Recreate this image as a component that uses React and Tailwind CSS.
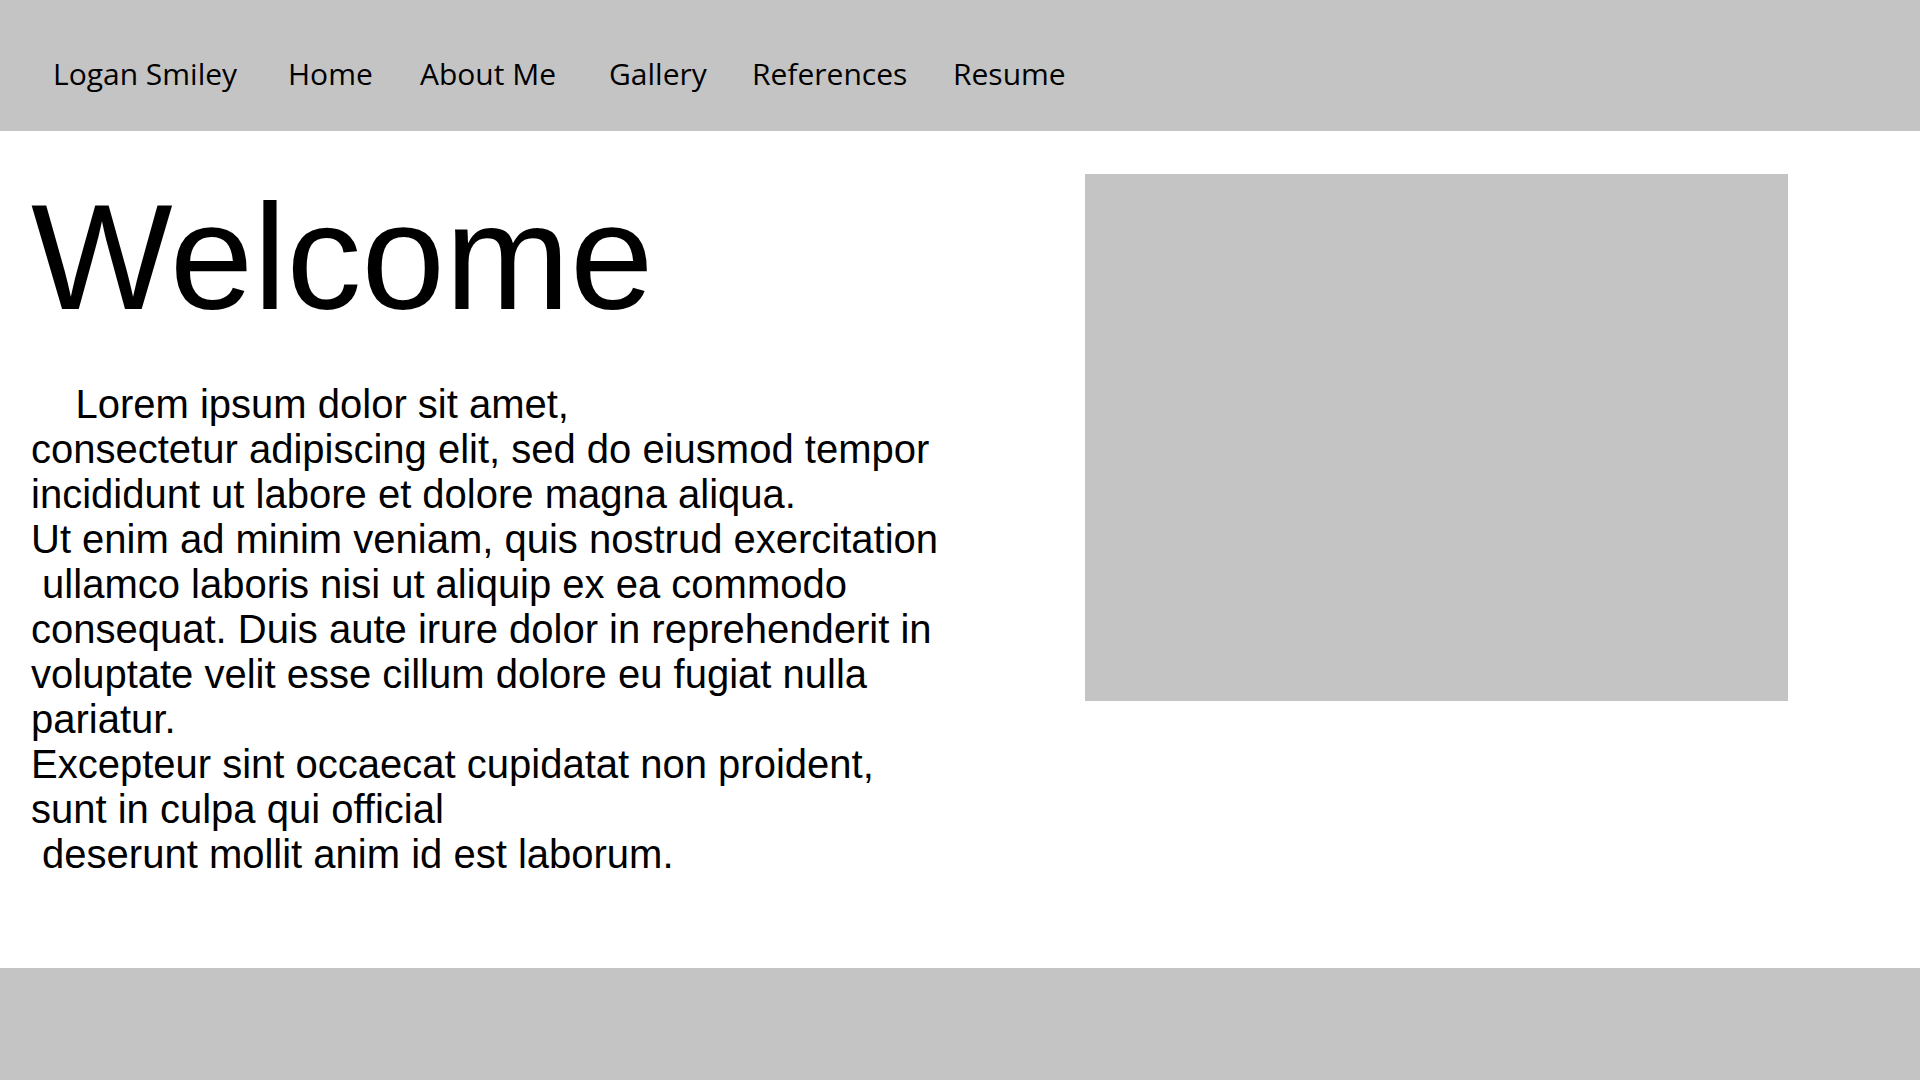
// widths taken from the reference so the links land where its font put them
const links = [
    { label: 'Logan Smiley', width: 'w-[187px]' },
    { label: 'Home', width: 'w-[84px]' },
    { label: 'About Me', width: 'w-[141px]' },
    { label: 'Gallery', width: 'w-[95px]' },
    { label: 'References', width: 'w-[153px]' },
    { label: 'Resume', width: 'w-auto' },
];

const lines = [
    '    Lorem ipsum dolor sit amet,',
    'consectetur adipiscing elit, sed do eiusmod tempor',
    'incididunt ut labore et dolore magna aliqua.',
    'Ut enim ad minim veniam, quis nostrud exercitation',
    ' ullamco laboris nisi ut aliquip ex ea commodo',
    'consequat. Duis aute irure dolor in reprehenderit in',
    'voluptate velit esse cillum dolore eu fugiat nulla',
    'pariatur.',
    'Excepteur sint occaecat cupidatat non proident,',
    'sunt in culpa qui official',
    ' deserunt mollit anim id est laborum.',
];

export default function App() {
    return (
        <div className="min-h-screen bg-white text-black">
            {/* Top navigation */}
            <nav className="h-[131px] bg-[#c4c4c4] px-[53px] pt-[53px] flex items-start gap-12 font-['Open_Sans',sans-serif] text-[30px] leading-[41px]">
                {links.map((link) => (
                    <a key={link.label} href="#" className={`${link.width} shrink-0 text-black whitespace-nowrap`}>
                        {link.label}
                    </a>
                ))}
            </nav>

            <main className="h-[837px] grid grid-cols-2 font-['Liberation_Sans',Arial,sans-serif]">
                <section className="pl-[31px] pt-[51px]">
                    <h1 className="text-[150px] leading-none font-normal">Welcome</h1>
                    <p className="mt-[50px] text-[40px] leading-[45px] whitespace-pre">
                        {lines.join('\n')}
                    </p>
                </section>
                <section className="pt-[43px]">
                    <div className="ml-[125px] w-[703px] h-[527px] bg-[#c4c4c4]" />
                </section>
            </main>

            <footer className="h-[112px] bg-[#c4c4c4]" />
        </div>
    );
}
